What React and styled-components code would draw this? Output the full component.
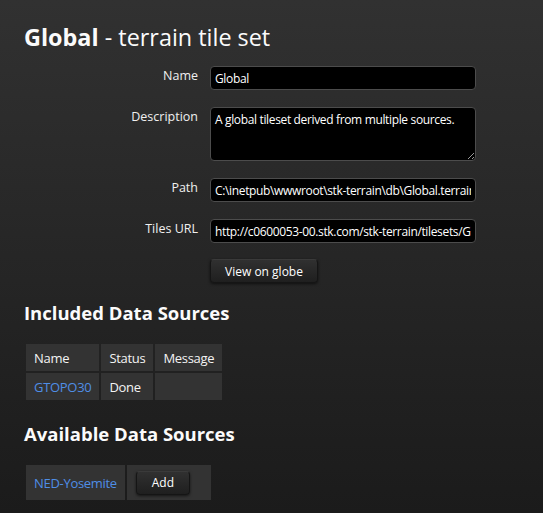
import React from "react";
import styled, { createGlobalStyle } from "styled-components";

const GlobalStyle = createGlobalStyle`
  html, body {
    margin: 0;
    padding: 0;
  }

  body {
    min-height: 513px;
    background: linear-gradient(to bottom, #313131 0%, #1b1b1b 100%);
    color: #f4f4f4;
    font-family: "Open Sans", "Noto Sans", sans-serif;
  }
`;

const fields = [
  { label: "Name", value: "Global" },
  { label: "Description", value: "A global tileset derived from multiple sources.", multiline: true },
  { label: "Path", value: "C:\\inetpub\\wwwroot\\stk-terrain\\db\\Global.terrain" },
  { label: "Tiles URL", value: "http://c0600053-00.stk.com/stk-terrain/tilesets/Global/tiles" },
];

const App = () => {
  return (
    <Page>
      <GlobalStyle />
      <Title>
        <strong>Global</strong> - terrain tile set
      </Title>

      <Form>
        {fields.map((f) => (
          <React.Fragment key={f.label}>
            <Label>{f.label}</Label>
            {f.multiline ? (
              <TextArea defaultValue={f.value} />
            ) : (
              <TextInput type="text" defaultValue={f.value} />
            )}
          </React.Fragment>
        ))}
        <span />
        <ButtonRow>
          <Button $wide>View on globe</Button>
        </ButtonRow>
      </Form>

      <SectionTitle>Included Data Sources</SectionTitle>
      <Table>
        <thead>
          <tr>
            <Th>Name</Th>
            <Th>Status</Th>
            <Th>Message</Th>
          </tr>
        </thead>
        <tbody>
          <tr>
            <Td><Link href="#">GTOPO30</Link></Td>
            <Td>Done</Td>
            <Td />
          </tr>
        </tbody>
      </Table>

      <SectionTitle $afterTable>Available Data Sources</SectionTitle>
      <Table>
        <tbody>
          <tr>
            <Td $tall><Link href="#">NED-Yosemite</Link></Td>
            <ActionCell>
              <Button>Add</Button>
            </ActionCell>
          </tr>
        </tbody>
      </Table>
    </Page>
  );
};

const Page = styled.div`
  padding: 21px 24px 0;
`;

const Title = styled.h1`
  margin: 0;
  font-size: 23.4px;
  font-weight: 400;
  line-height: 32px;
  color: #fbfbfb;

  strong {
    font-weight: 700;
  }
`;

const Form = styled.div`
  display: grid;
  grid-template-columns: 174px 266px;
  column-gap: 12px;
  row-gap: 17px;
  margin-top: 13px;
  align-items: start;
`;

const Label = styled.label`
  text-align: right;
  font-size: 12.5px;
  line-height: 16px;
  padding-top: 2px;
  color: #f0f0f0;
`;

const fieldBase = `
  box-sizing: border-box;
  width: 266px;
  margin: 0;
  padding: 0 4px;
  background: #000;
  border: 1px solid #4c4c4c;
  border-radius: 4px;
  color: #fff;
  font-family: "Open Sans", "Noto Sans", sans-serif;
  font-size: 12px;
  letter-spacing: -0.35px;
  outline: none;
`;

const TextInput = styled.input`
  ${fieldBase}
  height: 24px;
  overflow: hidden;
`;

const TextArea = styled.textarea`
  ${fieldBase}
  display: block;
  height: 54px;
  padding-top: 4px;
  line-height: 16px;
`;

const ButtonRow = styled.div`
  display: flex;
  margin-top: -1px;
`;

const Button = styled.button`
  display: block;
  box-sizing: border-box;
  height: 24px;
  width: ${(p) => (p.$wide ? "108px" : "54px")};
  padding: 0;
  border: 1px solid #151515;
  border-top-color: #3a3a3a;
  border-radius: 4px;
  background: linear-gradient(to bottom, #303030 0%, #1f1f1f 100%);
  box-shadow: 0 1px 3px rgba(0, 0, 0, 0.6);
  color: #fff;
  font-family: "Open Sans", "Noto Sans", sans-serif;
  font-size: 12px;
  cursor: pointer;
`;

const SectionTitle = styled.h2`
  margin: ${(p) => (p.$afterTable ? "19px" : "17px")} 0 16px;
  font-size: 18.5px;
  font-weight: 700;
  line-height: 26px;
  color: #fbfbfb;
`;

const Table = styled.table`
  border-collapse: separate;
  border-spacing: 2px;
  font-size: 13px;
  letter-spacing: -0.3px;
`;

const Th = styled.th`
  height: 27px;
  padding: 0 8px;
  background: #333;
  font-weight: 400;
  text-align: left;
  color: #f4f4f4;
`;

const Td = styled.td`
  height: ${(p) => (p.$tall ? "35px" : "27px")};
  padding: 0 8px;
  background: #333;
  color: #f4f4f4;
`;

const ActionCell = styled.td`
  height: 35px;
  padding: 0 21px 0 9px;
  background: #333;
`;

const Link = styled.a`
  color: #4f8ee6;
  text-decoration: none;
`;

export default App;
